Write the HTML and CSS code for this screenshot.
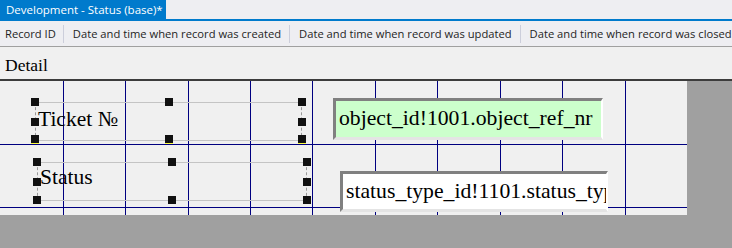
FILE: index.html
```html
<!DOCTYPE html>
<html>
<head>
<meta charset="utf-8">
<link rel="stylesheet" href="styles.css">
</head>
<body>
<div class="app">
  <div class="tabstrip">
    <div class="tab">Development - Status (base)*</div>
  </div>
  <div class="toolbar">
    <div class="col col-first">Record ID</div>
    <div class="col">Date and time when record was created</div>
    <div class="col">Date and time when record was updated</div>
    <div class="col col-last">Date and time when record was closed</div>
  </div>
  <div class="band">Detail</div>
  <div class="workspace">
    <div class="surface">
      <svg class="grid" width="687" height="134" viewBox="0 0 687 134">
        <g stroke="#000080" stroke-width="1" shape-rendering="crispEdges">
          <line x1="63.5" y1="0" x2="63.5" y2="134"/>
          <line x1="125.5" y1="0" x2="125.5" y2="134"/>
          <line x1="188.5" y1="0" x2="188.5" y2="134"/>
          <line x1="250.5" y1="0" x2="250.5" y2="134"/>
          <line x1="312.5" y1="0" x2="312.5" y2="134"/>
          <line x1="375.5" y1="0" x2="375.5" y2="134"/>
          <line x1="437.5" y1="0" x2="437.5" y2="134"/>
          <line x1="500.5" y1="0" x2="500.5" y2="134"/>
          <line x1="562.5" y1="0" x2="562.5" y2="134"/>
          <line x1="625.5" y1="0" x2="625.5" y2="134"/>
          <line x1="0" y1="63.5" x2="687" y2="63.5"/>
          <line x1="0" y1="126.5" x2="687" y2="126.5"/>
        </g>
      </svg>

      <div class="label label-ticket">
        <span class="label-text">Ticket №</span>
        <i class="h h-tl"></i><i class="h h-tm"></i><i class="h h-tr"></i>
        <i class="h h-ml"></i><i class="h h-mr"></i>
        <i class="h h-bl hy"></i><i class="h h-bm hy"></i><i class="h h-br hy"></i>
      </div>

      <div class="label label-status">
        <span class="label-text">Status</span>
        <i class="h h-tl"></i><i class="h h-tm"></i><i class="h h-tr"></i>
        <i class="h h-ml"></i><i class="h h-mr"></i>
        <i class="h h-bl"></i><i class="h h-bm"></i><i class="h h-br"></i>
      </div>

      <div class="field field-ref">object_id!1001.object_ref_nr</div>
      <div class="field field-status">status_type_id!1101.status_type_id</div>
    </div>
    <div class="rest"></div>
  </div>
  <div class="bottom"></div>
</div>
</body>
</html>
```

FILE: styles.css
```css
html, body {
  margin: 0;
  padding: 0;
  background: #a0a0a0;
}
.app {
  width: 732px;
  height: 248px;
  display: flex;
  flex-direction: column;
  overflow: hidden;
  font-family: "Open Sans", "Noto Sans", sans-serif;
}
.tabstrip {
  height: 19px;
  flex: none;
  background: #eeeef2;
  border-bottom: 2px solid #007acc;
  display: flex;
}
.tab {
  width: 166px;
  box-sizing: border-box;
  padding-left: 6px;
  background: #007acc;
  color: #ffffff;
  font-size: 11.5px;
  line-height: 19px;
  white-space: nowrap;
}
.toolbar {
  height: 25px;
  flex: none;
  background: #eeeef2;
  border-bottom: 1px solid #a0a0a0;
  display: flex;
  align-items: center;
  font-size: 11.2px;
  color: #1e1e1e;
  white-space: nowrap;
  overflow: hidden;
}
.col {
  padding: 0 8px 0 9px;
  line-height: 18px;
  border-right: 1px solid #cccedb;
}
.col-first {
  padding-left: 5px;
  padding-right: 7px;
}
.col-last {
  border-right: none;
}
.band {
  height: 34px;
  flex: none;
  box-sizing: border-box;
  padding: 8px 0 0 5px;
  background: #f0f0f0;
  border-bottom: 2px solid #3c3c3c;
  font-family: "Liberation Serif", serif;
  font-size: 17.5px;
  line-height: 20px;
  color: #000;
}
.workspace {
  display: flex;
  height: 134px;
  flex: none;
}
.surface {
  position: relative;
  width: 687px;
  height: 134px;
  background: #f0f0f0;
  flex: none;
  overflow: hidden;
}
.rest {
  flex: 1;
  background: #a0a0a0;
}
.bottom {
  flex: 1;
  background: #a0a0a0;
}
.grid {
  position: absolute;
  left: 0;
  top: 0;
}
.label {
  position: absolute;
  box-sizing: border-box;
  border-top: 1px solid #c4c4c4;
  border-bottom: 1px solid #c4c4c4;
  border-left: 1px dashed #9a9a9a;
  border-right: 1px dashed #9a9a9a;
  font-family: "Liberation Serif", serif;
  font-size: 21.5px;
  color: #000;
}
.label-ticket {
  left: 35px;
  top: 21px;
  width: 267px;
  height: 39px;
}
.label-status {
  left: 37px;
  top: 81px;
  width: 270px;
  height: 39px;
}
.label-text {
  position: absolute;
  left: 2px;
  top: 4px;
  line-height: 24px;
  white-space: nowrap;
}
.label-status .label-text {
  top: 2px;
}
.h {
  position: absolute;
  width: 8px;
  height: 8px;
  background: #111111;
}
.h-tl { left: -5px; top: -5px; }
.h-tm { left: calc(50% - 4px); top: -5px; }
.h-tr { right: -5px; top: -5px; }
.h-ml { left: -5px; top: calc(50% - 4px); }
.h-mr { right: -5px; top: calc(50% - 4px); }
.h-bl { left: -5px; bottom: -4px; }
.h-bm { left: calc(50% - 4px); bottom: -4px; }
.h-br { right: -5px; bottom: -4px; }
.hy {
  border-bottom: 1px solid #ffff40;
}
.field {
  position: absolute;
  box-sizing: border-box;
  border-top: 3px solid #808080;
  border-left: 3px solid #808080;
  border-right: 2px solid #ffffff;
  border-bottom: 3px solid #e4e4e4;
  font-family: "Liberation Serif", serif;
  font-size: 21.7px;
  color: #000;
  padding-left: 3px;
  line-height: 34px;
  white-space: nowrap;
  overflow: hidden;
}
.field-ref {
  left: 333px;
  top: 17px;
  width: 270px;
  height: 42px;
  background: #ccffcc;
}
.field-status {
  left: 340px;
  top: 90px;
  width: 268px;
  height: 41px;
  background: #ffffff;
}
```
